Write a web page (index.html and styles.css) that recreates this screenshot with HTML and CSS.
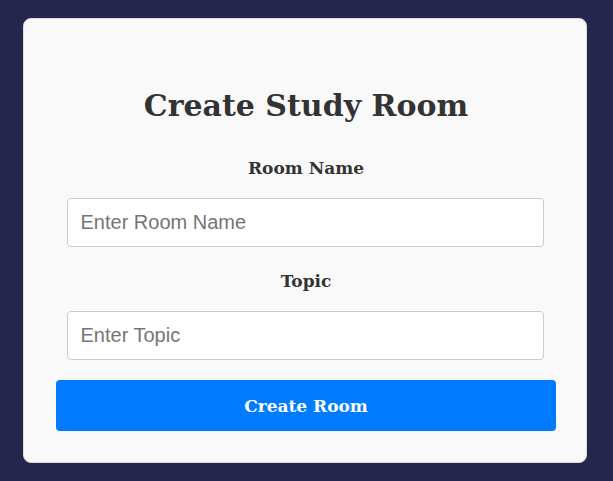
FILE: index.html
```html
<!DOCTYPE html>
<html lang="en">
<head>
<meta charset="utf-8">
<title>Create Study Room</title>
<link rel="stylesheet" href="styles.css">
</head>
<body>
<main class="card">
  <h1 class="title">Create Study Room</h1>
  <form class="form">
    <label class="label label-first" for="room">Room Name</label>
    <input class="input" id="room" type="text" placeholder="Enter Room Name">
    <label class="label" for="topic">Topic</label>
    <input class="input" id="topic" type="text" placeholder="Enter Topic">
    <button class="button" type="button">Create Room</button>
  </form>
</main>
</body>
</html>
```
FILE: styles.css
```css
html, body {
  margin: 0;
  padding: 0;
}
body {
  background: #25264d;
  font-family: "DejaVu Serif", serif;
  color: #333;
  min-height: 481px;
  padding-top: 18px;
  box-sizing: border-box;
}
.card {
  box-sizing: border-box;
  width: 564px;
  height: 445px;
  margin-left: 23px;
  background: #f9f9f9;
  border: 1px solid #dcdcdc;
  border-radius: 8px;
  padding: 0 30px 0 32px;
  display: flex;
  flex-direction: column;
  align-items: center;
}
.title {
  margin: 69px 0 0;
  font-size: 30px;
  line-height: 36px;
  font-weight: bold;
  color: #333;
}
.form {
  width: 100%;
  display: flex;
  flex-direction: column;
  align-items: center;
}
.label {
  margin-top: 22px;
  font-size: 17px;
  line-height: 24px;
  font-weight: bold;
  color: #333;
}
.label-first {
  margin-top: 32px;
}
.input {
  box-sizing: border-box;
  margin-top: 18px;
  margin-right: 2px;
  width: 477px;
  height: 49px;
  padding: 0 13px;
  border: 1px solid #cccccc;
  border-radius: 4px;
  background: #fff;
  font-family: "Liberation Sans", Arial, sans-serif;
  font-size: 20px;
  color: #333;
}
.input::placeholder {
  color: #757575;
}
.button {
  box-sizing: border-box;
  margin-top: 20px;
  width: 500px;
  height: 51px;
  border: none;
  border-radius: 4px;
  background: #007bff;
  color: #fff;
  font-family: "DejaVu Serif", serif;
  font-size: 17px;
  font-weight: bold;
}
```
